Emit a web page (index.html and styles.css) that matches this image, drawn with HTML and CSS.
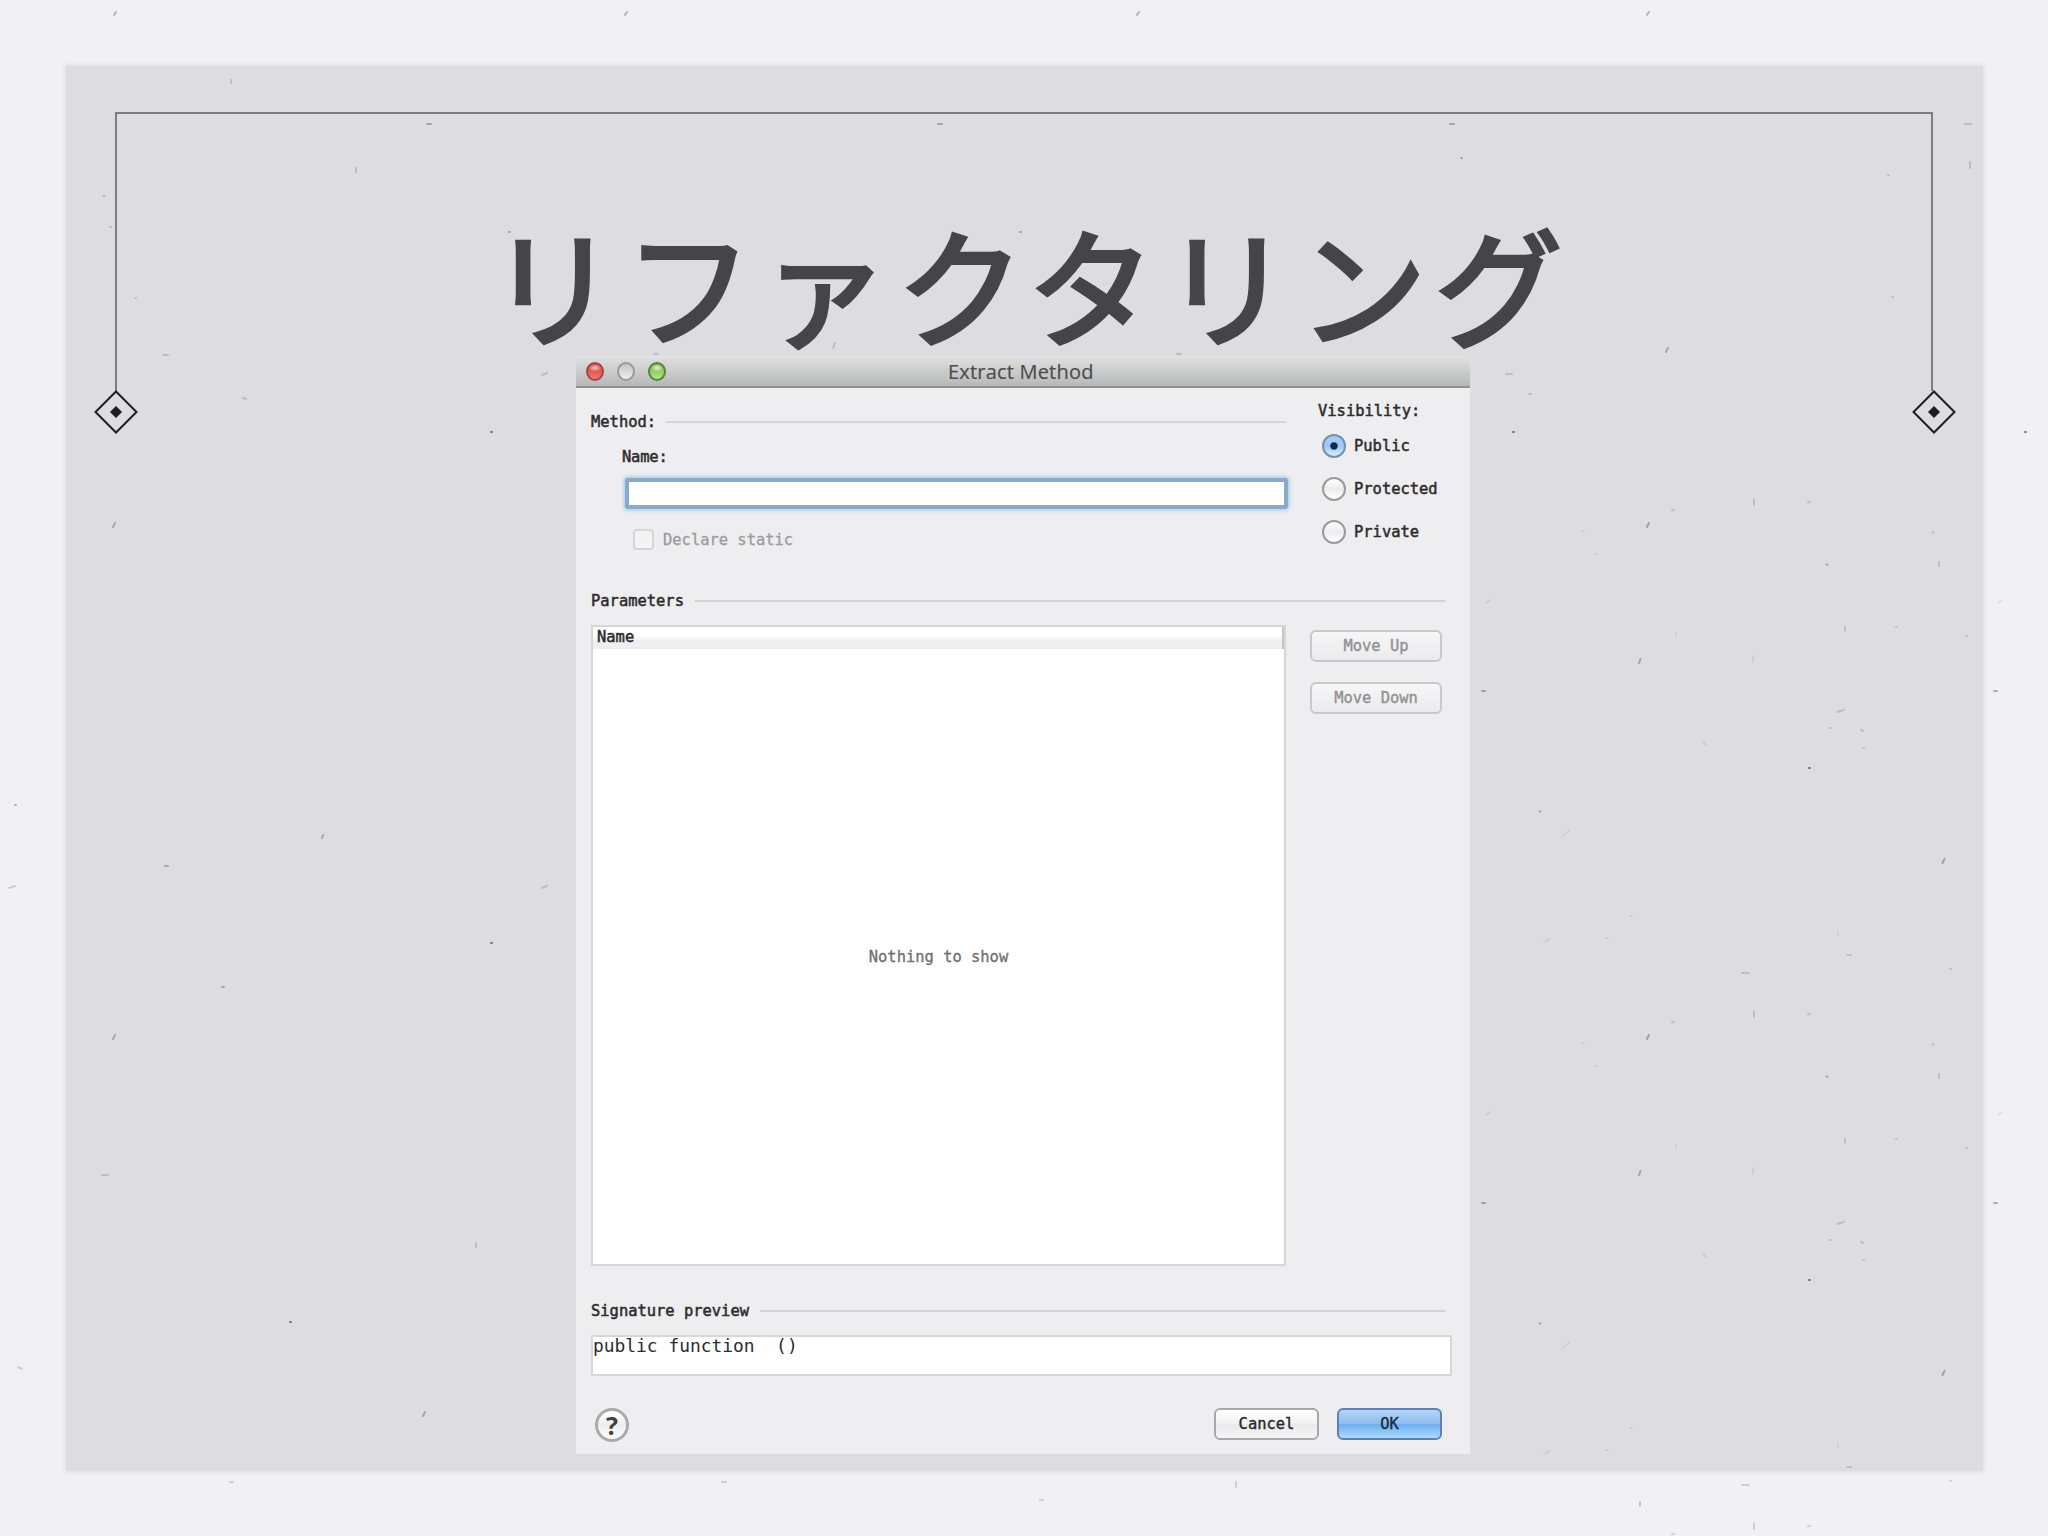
FILE: index.html
```
<!DOCTYPE html>
<html lang="ja">
  <head>
    <meta charset="UTF-8">
    <meta name="viewport" content="width=device-width, initial-scale=1.0">
    <title>リファクタリング</title>
    <link rel="stylesheet" href="styles.css">
  </head>

  <body>

    <div id="slide">

      <!-- Paper specks: a 512px tile on the right, loose ones elsewhere -->
      <svg id="paper" width="2048" height="1536" aria-hidden="true">
        <defs>
          <pattern id="specks" x="448" y="0" width="512" height="512" patternUnits="userSpaceOnUse">
            <g fill="none" stroke="#55555c" stroke-width="2" stroke-linecap="round">
              <g opacity=".45">
                <path d="M177 11l-2 4M168.500 147l-1.500 4M472.500 347l-2 4"/>
                <path d="M10 179h3M354.500 52.500h1M67.500 299.500h1"/>
              </g>
              <path opacity=".8" d="M337 256h1"/>
              <g opacity=".22">
                <path d="M365 200l7-2M373 115v4M389 218l2 1M424 115h1M460 20.500h2M270 461h7M375 443h4M282 499v6M336 502h2M200 510h2"/>
                <path d="M391 236h1M494 124h1M467 50v4M357 216h2M478 457h1"/>
              </g>
              <g opacity=".1">
                <path d="M14 91l4-3M123 42h3M204 121v3M281 144v6M231 230l3 3M90 324l7-5M72 430l6-3M134 426h2M366 420v3M110 19h2M158 404h2"/>
              </g>
            </g>
          </pattern>
        </defs>
        <rect x="1470" y="480" width="578" height="1056" fill="url(#specks)"/>
        <g fill="none" stroke="#55555c" stroke-width="2" stroke-linecap="round">
          <path opacity=".75" d="M491 432h1M491 943h1M290 1322h1M2025 432h1M1513 432h1"/>
          <g opacity=".4">
            <path d="M116 12l-2 3M627 12l-2 3M1139 12l-2 3M1649 12l-2 3M115 523l-2 4M115 1035l-2 4M323 835l-1 3M425 1412l-2 4M1668 348l-2 4"/>
            <path d="M427 124h4M938 124h4M1450 124h4M165 866h3M222 987h2M509 232h1M1020 232h1M1461 158h1M15 805h1"/>
          </g>
          <g opacity=".22">
            <path d="M356 168v4M163 355h5M542 375l5-2M243 398l3 1M476 1243v4M18 1367l4 2M102 1175h6M542 888l5-2M1965 124h6M1970 162v6M1888 175h1"/>
            <path d="M103 196h2M110 227h1M135 298h1M231 80v3M9 888l6-2M654 354h4M1177 354h4M1506 374h6M1529 394h2M1892 297h1M835 343l-2 5M1236 1482v5M1640 1502v4M230 1482h3M722 1482h4M1040 1500h3"/>
          </g>
        </g>
      </svg>

      <!-- Frame with a diamond at each end -->
      <svg id="frame" width="2048" height="450" aria-hidden="true">
        <path d="M116 391V113H1932V391" fill="none" stroke="#7c7c81" stroke-width="2"/>
        <g fill="none" stroke="#1d1d21" stroke-width="2">
          <path d="M116 391.500l20.500 20.500l-20.500 20.500l-20.500-20.500z"/>
          <path d="M1934 391.500l20.500 20.500l-20.500 20.500l-20.500-20.500z"/>
        </g>
        <g fill="#1d1d21">
          <path d="M116 406l6 6l-6 6l-6-6z"/>
          <path d="M1934 406l6 6l-6 6l-6-6z"/>
        </g>
      </svg>

      <h1>リファクタリング</h1>

      <div class="dialog">
        <div class="titlebar">
          <div class="lights">
            <span class="light red"></span>
            <span class="light grey"></span>
            <span class="light green"></span>
          </div>
          <div class="caption">Extract Method</div>
        </div>

        <div class="content">

          <div class="top">
            <div class="method">
              <div class="heading">Method:<span class="rule"></span></div>
              <label class="name-label" for="name">Name:</label>
              <input id="name" type="text">
              <div class="check"><span class="box"></span>Declare static</div>
            </div>

            <div class="visibility">
              <div class="legend">Visibility:</div>
              <div class="option"><span class="radio on"></span>Public</div>
              <div class="option"><span class="radio"></span>Protected</div>
              <div class="option"><span class="radio"></span>Private</div>
            </div>
          </div>

          <div class="heading wide">Parameters<span class="rule"></span></div>

          <div class="params">
            <div class="table">
              <div class="th">Name</div>
              <div class="empty">Nothing to show</div>
            </div>
            <div class="moves">
              <button disabled>Move Up</button>
              <button disabled>Move Down</button>
            </div>
          </div>

          <div class="heading wide sig">Signature preview<span class="rule"></span></div>
          <div class="preview">public function&nbsp; ()</div>

          <div class="footer">
            <div class="help">?</div>
            <button class="cancel">Cancel</button>
            <button class="ok">OK</button>
          </div>

        </div>
      </div>

    </div>

  </body>
</html>
```

FILE: styles.css
```
* { box-sizing: border-box; }

body {
	margin: 0;
	background-color: #f1f1f5;
	font-family: "DejaVu Sans Mono", monospace;
	font-size: 15.45px;
	line-height: 20px;
	color: #2c2c2e;
}

#slide {
	position: relative;
	width: 2048px;
	height: 1536px;
	padding-top: 222px;
	overflow: hidden;

	/* Grey sheet with a soft edge */
	background: linear-gradient(#dddce1, #dddce1) 66px 66px / 1917px 1405px no-repeat;
}

#slide::before {
	content: "";
	position: absolute;
	top: 66px;
	left: 66px;
	width: 1917px;
	height: 1405px;
	box-shadow: 0 0 4px 1px #dddce1;
}

#paper, #frame {
	position: absolute;
	top: 0;
	left: 0;
}

h1 {
	position: relative;
	height: 134px;
	margin: 0;
	padding-left: 489px;
	color: #454548;
	font-family: "Noto Sans CJK JP", sans-serif;
	font-size: 128px;
	font-weight: 400;
	line-height: 122px;
	letter-spacing: 7.8px;
	white-space: nowrap;
	-webkit-text-stroke: 4px #454548;
}

.dialog {
	position: relative;
	width: 894px;
	height: 1098px;
	margin-left: 576px;
	background-color: #eeedef;
}

.titlebar {
	display: flex;
	align-items: center;
	height: 32px;
	padding-left: 10px;
	border-bottom: 2px solid #919191;
	background: linear-gradient(#e0e1e1, #b6b7b7);
}

.lights {
	display: flex;
	gap: 13px;
	width: 362px;
}

.light {
	width: 18px;
	height: 19px;
	border: 2px solid #8d8d8d;
	border-radius: 50%;
}

.red {
	border-color: #a64644;
	background: radial-gradient(ellipse 7px 4px at 50% 25%, #fbc9c4, transparent), linear-gradient(#cf3b38, #f47a73);
}

.grey {
	border-color: #999;
	background: linear-gradient(#c4c4c4, #eee);
}

.green {
	border-color: #55853f;
	background: radial-gradient(ellipse 7px 4px at 50% 25%, #e1f6cd, transparent), linear-gradient(#72ae4a, #b4ea83);
}

.caption {
	padding-top: 2px;
	color: #4d4d4d;
	font-family: "Open Sans", sans-serif;
	font-size: 20px;
	letter-spacing: 0.2px;
	white-space: nowrap;
	-webkit-text-stroke: 0.2px #4d4d4d;
}

.content { padding: 0 19px 0 15px; }

.top {
	display: flex;
	height: 203px;
}

.method {
	display: flex;
	flex-direction: column;
	width: 727px;
	padding: 24px 32px 0 0;
}

.heading {
	display: flex;
	align-items: center;
	gap: 10px;
	height: 20px;
	-webkit-text-stroke: 0.5px #2c2c2e;
}

.rule {
	flex: 1;
	height: 2px;
	background-color: #d4d3d6;
}

.name-label {
	margin: 15px 0 9px 31px;
	letter-spacing: -0.2px;
	-webkit-text-stroke: 0.5px #2c2c2e;
}

#name {
	width: 663px;
	height: 31px;
	margin: 2px 0 0 34px;
	border: 4px solid #8ba9c8;
	border-radius: 3px;
	background-color: #fff;
	outline: none;
	box-shadow: 0 0 3px 2px #b5d3ee;
}

.check {
	display: flex;
	align-items: center;
	gap: 9px;
	margin: 20px 0 0 42px;
	color: #9b9b9d;
	-webkit-text-stroke: 0.3px #9b9b9d;
}

.box {
	width: 21px;
	height: 21px;
	border: 2px solid #d5d5d7;
	border-radius: 4px;
	background-color: #f3f3f4;
}

.visibility {
	padding-top: 13px;
	-webkit-text-stroke: 0.5px #2c2c2e;
}

.legend { margin-bottom: 13px; }

.option {
	display: flex;
	align-items: center;
	gap: 8px;
	height: 24px;
	margin: 0 0 19px 4px;
}

.radio {
	width: 24px;
	height: 24px;
	border: 2px solid #9a9a9d;
	border-radius: 50%;
	background: linear-gradient(#fff, #ececee 50%, #fff);
}

.radio.on {
	border-color: #7790b2;
	background: radial-gradient(circle, #10294d 3px, transparent 4.500px), linear-gradient(#a6cbf2, #9cc8f5 50%, #d3efff);
}

.wide { margin-right: 5px; gap: 11px; }

.params {
	display: flex;
	margin-top: 14px;
}

.table {
	display: flex;
	flex-direction: column;
	width: 695px;
	height: 641px;
	margin-right: 24px;
	border: 2px solid #d6d6d9;
	background-color: #fff;
}

.th {
	height: 22px;
	padding-left: 4px;
	border-right: 2px solid #c5c5c8;
	background: linear-gradient(#fff 40%, #f0f0f2 60%, #eeeef0);
	-webkit-text-stroke: 0.5px #2c2c2e;
}

.empty {
	display: flex;
	flex: 1;
	align-items: center;
	justify-content: center;
	color: #6f6f6f;
	-webkit-text-stroke: 0.3px #6f6f6f;
}

.moves {
	display: flex;
	flex-direction: column;
	gap: 20px;
	padding-top: 5px;
}

button {
	width: 132px;
	height: 32px;
	padding: 0;
	border: 2px solid #c9c9cc;
	border-radius: 6px;
	background: linear-gradient(#f6f6f7, #ebebed);
	color: #929295;
	font-family: inherit;
	font-size: inherit;
	-webkit-text-stroke: 0.4px;
}

.sig { margin-top: 35px; }

.preview {
	width: 861px;
	height: 41px;
	margin-top: 14px;
	border: 2px solid #d6d6d9;
	background-color: #fff;
	font-size: 17.900px;
	line-height: 18px;
	white-space: pre;
}

.footer {
	display: flex;
	align-items: flex-start;
	margin-top: 32px;
}

.help {
	width: 34px;
	height: 34px;
	margin: 0 auto 0 4px;
	border: 3px solid #aaaaad;
	border-radius: 50%;
	background: linear-gradient(#fff, #ededef 50%, #fff);
	color: #3f3f41;
	font-family: "Open Sans", sans-serif;
	font-size: 25px;
	font-weight: 700;
	line-height: 28px;
	text-align: center;
}

.cancel, .ok {
	width: 105px;
	margin-right: 18px;
	color: #29292b;
	border-color: #a8a8ab;
	background: linear-gradient(#fff, #f1f1f3 50%, #e9e9eb 52%, #f6f6f7);
}

.ok {
	margin-right: 9px;
	border-color: #617fb4;
	color: #1c2c47;
	background: linear-gradient(#b5d3f6, #8dbdf1 50%, #71aeee 52%, #a8dbfc);
}
```
